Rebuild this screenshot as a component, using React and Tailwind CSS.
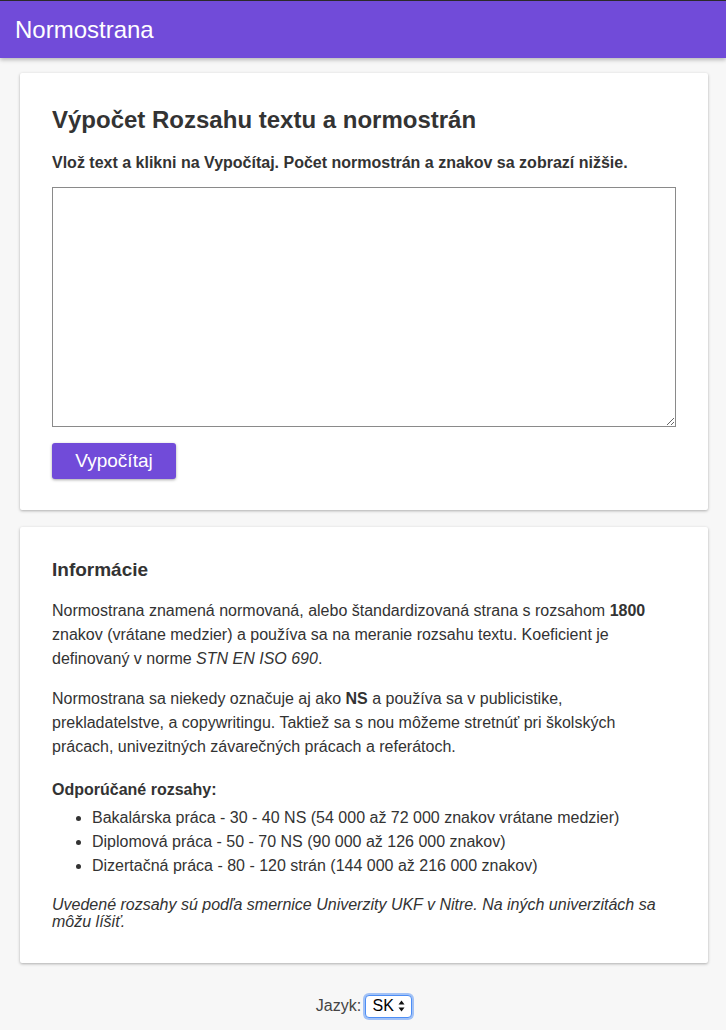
import React from "react";

export default function App() {
  return (
    <div className="min-h-[1030px] bg-[#f7f7f7] text-[#333]" style={{ fontFamily: '"Liberation Sans", Arial, Helvetica, sans-serif' }}>
      <header className="h-[58px] border-t border-[#2a2a2a] bg-[#714bd9] shadow-[0_2px_4px_rgba(0,0,0,0.25)] flex items-center px-[15px]">
        <h1 className="text-white text-[24px] leading-none">Normostrana</h1>
      </header>

      <main className="ml-[20px] mr-[18px] pt-[15px]">
        <section className="bg-white rounded-[2px] shadow-[0_1px_3px_rgba(0,0,0,0.3)] px-[32px] pt-[33px] pb-[31px]">
          <h2 className="text-[24px] font-bold leading-[28px]">Výpočet Rozsahu textu a normostrán</h2>
          <p className="mt-[20px] text-[16px] font-bold leading-[18px]">Vlož text a klikni na Vypočítaj. Počet normostrán a znakov sa zobrazí nižšie.</p>
          <textarea className="mt-[15px] block w-full h-[240px] border border-[#8a8a8a] bg-white outline-none resize-y"></textarea>
          <button className="mt-[16px] h-[36px] w-[124px] bg-[#714bd9] rounded-[3px] text-white text-[19px] shadow-[0_1px_3px_rgba(0,0,0,0.35)]">Vypočítaj</button>
        </section>

        <section className="mt-[17px] bg-white rounded-[2px] shadow-[0_1px_3px_rgba(0,0,0,0.3)] px-[32px] pt-[32px] pb-[33px]">
          <h3 className="text-[19px] font-bold leading-[22px]">Informácie</h3>
          <p className="mt-[18px] text-[16px] leading-[24px]">
            Normostrana znamená normovaná, alebo štandardizovaná strana s rozsahom <b>1800</b> znakov (vrátane medzier) a používa sa na meranie rozsahu textu. Koeficient je definovaný v norme <i>STN EN ISO 690</i>.
          </p>
          <p className="mt-[16px] text-[16px] leading-[24px]">
            Normostrana sa niekedy označuje aj ako <b>NS</b> a používa sa v publicistike, prekladatelstve, a copywritingu. Taktiež sa s nou môžeme stretnúť pri školských prácach, univezitných závarečných prácach a referátoch.
          </p>
          <h4 className="mt-[19px] text-[16px] font-bold leading-[24px]">Odporúčané rozsahy:</h4>
          <ul className="mt-[4px] list-disc pl-[40px] text-[16px] leading-[24px]">
            <li>Bakalárska práca - 30 - 40 NS (54 000 až 72 000 znakov vrátane medzier)</li>
            <li>Diplomová práca - 50 - 70 NS (90 000 až 126 000 znakov)</li>
            <li>Dizertačná práca - 80 - 120 strán (144 000 až 216 000 znakov)</li>
          </ul>
          <p className="mt-[18px] text-[16px] italic leading-[17px]">
            Uvedené rozsahy sú podľa smernice Univerzity UKF v Nitre. Na iných univerzitách sa môžu líšiť.
          </p>
        </section>

        <footer className="flex justify-center items-center pt-[31px] pb-[12px] text-[16px]">
          <span className="text-[#444]">Jazyk:</span>
          <div className="ml-[4px] h-[23px] w-[47px] rounded-[4px] border border-[#4d8ef5] shadow-[0_0_0_2px_rgba(77,142,245,0.5)] bg-white flex items-center justify-center gap-[4px] text-black">
            <span className="text-[16px] leading-none">SK</span>
            <svg width="7" height="12" viewBox="0 0 7 12"><path d="M3.5 0.5 L6.5 4.5 L0.5 4.5 Z" fill="#111"/><path d="M3.5 11.5 L6.5 7.5 L0.5 7.5 Z" fill="#111"/></svg>
          </div>
        </footer>
      </main>
    </div>
  );
}
